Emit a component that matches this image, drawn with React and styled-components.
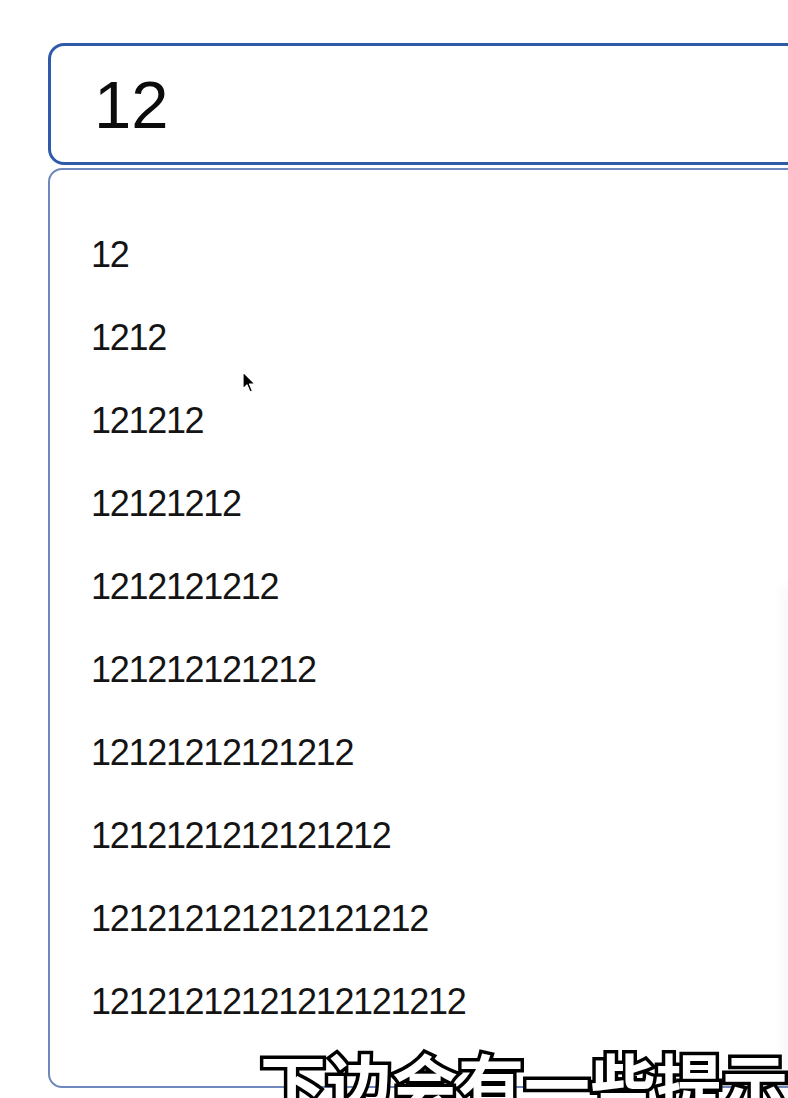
import React from "react";
import styled, { createGlobalStyle } from "styled-components";

const Global = createGlobalStyle`
  html, body {
    margin: 0;
    padding: 0;
    background: #ffffff;
    overflow: hidden;
    width: 788px;
    height: 1098px;
  }
  body {
    font-family: "Liberation Sans", Arial, "Noto Sans CJK SC", sans-serif;
    color: #111;
  }
`;

const Page = styled.div`
  position: relative;
  width: 788px;
  height: 1098px;
  overflow: hidden;
  box-sizing: border-box;
  padding: 43px 0 0 48px;
`;

const Search = styled.div`
  width: 860px;
  display: flex;
  flex-direction: column;
  gap: 3px;
`;

const InputBox = styled.div`
  box-sizing: border-box;
  height: 122px;
  border: 3px solid #2f5aa9;
  border-radius: 16px;
  display: flex;
  align-items: center;
  padding-left: 43px;
  font-size: 67px;
  line-height: 1;
  color: #0c0c0c;
`;

const Dropdown = styled.ul`
  box-sizing: border-box;
  margin: 0;
  list-style: none;
  border: 2px solid #6f87bb;
  border-radius: 14px;
  padding: 43px 0 43px 41px;
`;

const Item = styled.li`
  height: 83px;
  line-height: 83px;
  font-size: 36px;
  letter-spacing: -1.3px;
  color: #141414;
`;

const EdgeShade = styled.div`
  position: absolute;
  left: 788px;
  top: 585px;
  width: 40px;
  height: 600px;
  box-shadow: -5px 0 14px rgba(0, 0, 0, 0.035);
`;

const Pointer = styled.svg`
  position: absolute;
  left: 240px;
  top: 369px;
  width: 18px;
  height: 28px;
`;

const Subtitle = styled.div`
  position: absolute;
  left: 260px;
  top: 1048px;
  font-family: "Noto Sans CJK SC", sans-serif;
  font-weight: 700;
  font-size: 66px;
  line-height: 1;
  white-space: nowrap;
  color: #ffffff;
  -webkit-text-stroke: 7px #000;
  paint-order: stroke fill;
`;

const items = Array.from({ length: 10 }, (_, i) => "12".repeat(i + 1));

export default function App() {
  return (
    <>
      <Global />
      <Page>
        <Search>
          <InputBox>12</InputBox>
          <Dropdown>
            {items.map((t) => (
              <Item key={t}>{t}</Item>
            ))}
          </Dropdown>
        </Search>
        <EdgeShade />
        <Pointer viewBox="0 0 18 28">
          <path
            d="M3 3 L3 20 L7 16 L10 23 L12.5 22 L9.5 15 L15 15 Z"
            fill="#000"
            stroke="#fff"
            strokeWidth="1.2"
            strokeLinejoin="round"
          />
        </Pointer>
        <Subtitle>下边会有一些提示</Subtitle>
      </Page>
    </>
  );
}
